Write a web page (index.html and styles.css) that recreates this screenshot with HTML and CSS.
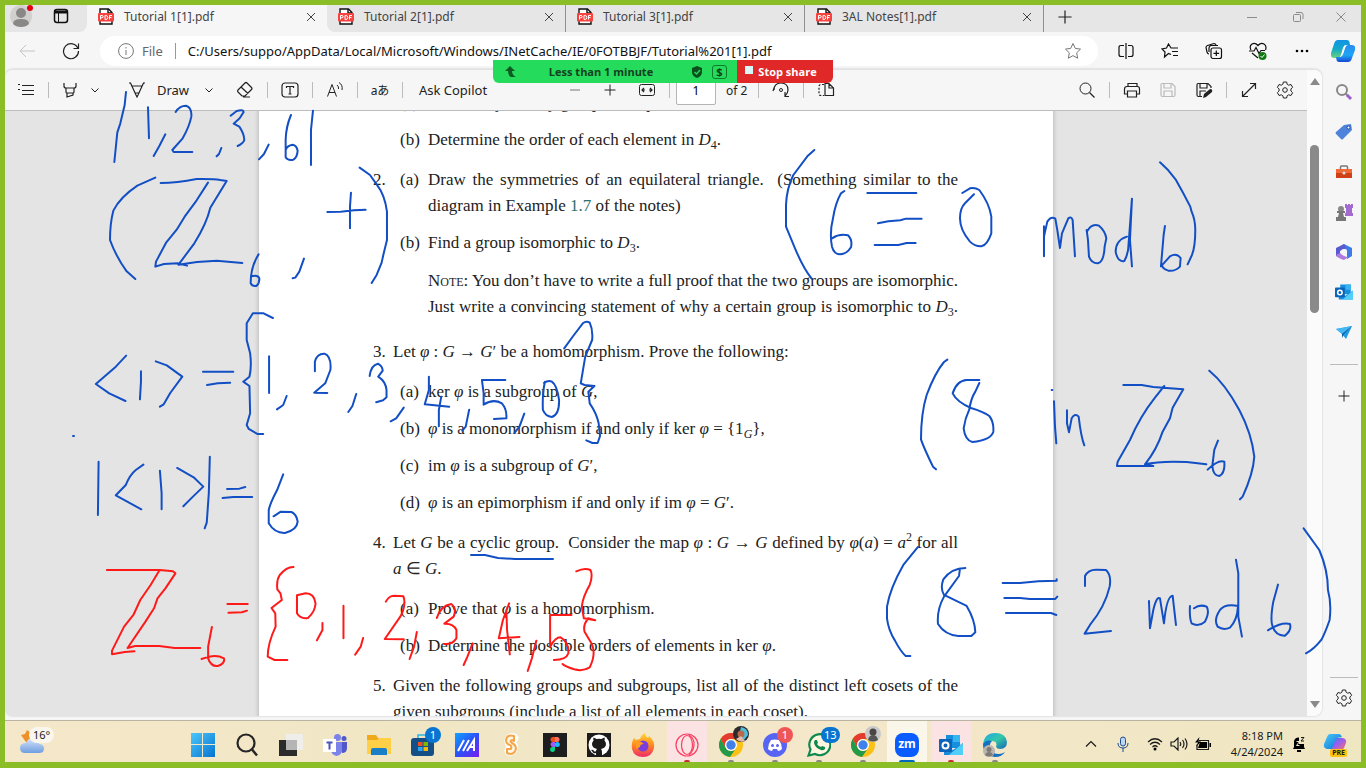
FILE: index.html
```html
<!DOCTYPE html>
<html lang="en">
<head>
<meta charset="utf-8">
<title>Tutorial 1[1].pdf</title>
<link rel="stylesheet" href="styles.css">
</head>
<body>
<svg class="defs" aria-hidden="true">
  <symbol id="pdf" viewBox="0 0 16 18">
    <path d="M2 1h8.500l3.500 3.500V16H2z" fill="#fff" stroke="#111" stroke-width="1.400"/><path d="M10 1v4h4" fill="none" stroke="#111" stroke-width="1.400"/>
    <rect x="0" y="5" width="16" height="8.500" rx="1" fill="#f8423e"/>
    <path d="M2.500 11.500v-4h1.500a1 1 0 0 1 0 2.300h-1.500M7 7.500v4h.8a2 2 0 0 0 0-4zM11.500 11.500v-4h2.500M11.500 9.500h2" fill="none" stroke="#fff"/>
  </symbol>
  <symbol id="x" viewBox="0 0 16 16"><path d="M4 4l8 8M12 4l-8 8" class="ln"/></symbol>
  <symbol id="chev" viewBox="0 0 12 12"><path d="M2.500 4.500L6 8l3.500-3.500" class="ln"/></symbol>
  <symbol id="plus" viewBox="0 0 20 20"><path d="M10 4.500v11M4.500 10h11" class="ln"/></symbol>
  <symbol id="gear" viewBox="0 0 20 20"><circle cx="10" cy="10" r="2.300" class="ln"/><path d="M8.400 2h3.200l.6 2.300 1.500.9 2.300-.7 1.600 2.800-1.700 1.700v2l1.700 1.700-1.600 2.800-2.300-.7-1.500.9-.6 2.300H8.400l-.6-2.300-1.500-.9-2.300.7-1.600-2.800L4.100 11V9L2.400 7.300 4 4.500l2.300.7 1.500-.9z" class="ln"/></symbol>
  <symbol id="outlook" viewBox="0 0 24 24"><rect x="7" y="2" width="14" height="13" fill="#1490df"/><path d="M14 2h7v7h-7z" fill="#36b5f0"/><path d="M5 11l9 6 10-7v12H5z" fill="#1a8ad8"/><path d="M24 10v12H10z" fill="#50d0f8"/><rect x="0" y="6" width="13" height="13" rx="1" fill="#0c64b8"/><circle cx="6.500" cy="12.500" r="3" fill="none" stroke="#fff" stroke-width="2"/></symbol>
  <symbol id="chrome" viewBox="0 0 24 24"><circle cx="12" cy="12" r="12" fill="#fbc116"/><path d="M1.600 6A12 12 0 0 1 22.400 6H12a6 6 0 0 0-5.200 9z" fill="#e33b2e"/><path d="M1.600 6A12 12 0 0 0 11 24l6.200-9A6 6 0 0 1 6.800 15z" fill="#229a4a"/><circle cx="12" cy="12" r="6" fill="#fff"/><circle cx="12" cy="12" r="4.700" fill="#3f80ea"/></symbol>
  <symbol id="copilot" viewBox="0 0 24 22"><path d="M7 0h9q2 0 2.500 2L19 5h-4q-2 0-3 3l-2 7q-1 3-3 3H3q-4 0-3-5L3 4q1-4 4-4z" fill="url(#cpa)"/><path d="M17 22H8q-2 0-2.500-2L5 17h4q2 0 3-3l2-6q1-3 3-3h4q4 0 3 5l-3 8q-1 4-4 4z" fill="url(#cpb)"/><path d="M12 8q1-3 3-3l-3 9q-1 3-3 3l2-4z" fill="#fff" opacity=".85"/></symbol>
  <linearGradient id="cpa" x2="0" y2="1"><stop stop-color="#1192e6"/><stop offset=".5" stop-color="#12a9c8"/><stop offset="1" stop-color="#6bd37a"/></linearGradient>
  <linearGradient id="cpb" x2="0" y2="1"><stop stop-color="#2a8cf0"/><stop offset=".6" stop-color="#1ba6f6"/><stop offset="1" stop-color="#1747d6"/></linearGradient>
  <linearGradient id="pre" x2="1" y2="1"><stop stop-color="#1e8cf0"/><stop offset=".45" stop-color="#9b5cf0"/><stop offset="1" stop-color="#ff7a5a"/></linearGradient>
  <linearGradient id="win" x2="1" y2="1"><stop stop-color="#4cc8fb"/><stop offset="1" stop-color="#0573d0"/></linearGradient>
  <linearGradient id="maxi" x2="1" y2="1"><stop stop-color="#10a4ff"/><stop offset=".5" stop-color="#2a52f8"/><stop offset="1" stop-color="#7a1cf0"/></linearGradient>
  <linearGradient id="fox" x2="0" y2="1"><stop stop-color="#ffd637"/><stop offset=".5" stop-color="#ff8a1e"/><stop offset="1" stop-color="#f0286c"/></linearGradient>
  <linearGradient id="edge" x2="1" y2="1"><stop stop-color="#1fa6e8"/><stop offset=".5" stop-color="#34c8a8"/><stop offset="1" stop-color="#1565b8"/></linearGradient>
  <linearGradient id="cloud" x2="0" y2="1"><stop stop-color="#d7e6fb"/><stop offset="1" stop-color="#6f9ee0"/></linearGradient>
</svg>

<div class="desktop">
  <header class="tabstrip">
    <div class="corner">
      <button class="avatar" aria-label="Profile"><svg width="22" height="22"><circle cx="11" cy="11" r="11" fill="#d2d0ce"/><circle cx="11" cy="8" r="5" fill="#8a8886"/><path d="M3 19q0-5 8-5t8 5q-3 3-8 3t-8-3z" fill="#8a8886"/></svg><span class="dot"></span></button>
      <button aria-label="Workspaces"><svg width="16" height="16"><rect x="1.500" y="1.500" width="13" height="13" rx="2.500" fill="none" stroke="#111" stroke-width="1.500"/><path d="M1 2.500h14v3H1z" fill="#111"/><path d="M5.500 5v9" stroke="#111"/></svg></button>
    </div>
    <div class="tab active"><svg width="16" height="18"><use href="#pdf"/></svg><span>Tutorial 1[1].pdf</span><button aria-label="Close tab"><svg width="16" height="16"><use href="#x"/></svg></button></div>
    <div class="tabs">
      <div class="tab"><svg width="16" height="18"><use href="#pdf"/></svg><span>Tutorial 2[1].pdf</span><button aria-label="Close tab"><svg width="16" height="16"><use href="#x"/></svg></button></div>
      <div class="tab"><svg width="16" height="18"><use href="#pdf"/></svg><span>Tutorial 3[1].pdf</span><button aria-label="Close tab"><svg width="16" height="16"><use href="#x"/></svg></button></div>
      <div class="tab"><svg width="16" height="18"><use href="#pdf"/></svg><span>3AL Notes[1].pdf</span><button aria-label="Close tab"><svg width="16" height="16"><use href="#x"/></svg></button></div>
      <button class="newtab" aria-label="New tab"><svg width="24" height="24" viewBox="0 0 20 20"><use href="#plus"/></svg></button>
      <div class="winbtns">
        <button aria-label="Minimize"><svg width="12" height="12"><path d="M1 6.500h10" class="ln"/></svg></button>
        <button aria-label="Restore"><svg width="12" height="12"><rect x="1.500" y="3.500" width="7" height="7" rx="1" class="ln"/><path d="M4 1.500h5q2 0 2 2V8" class="ln"/></svg></button>
        <button aria-label="Close"><svg width="12" height="12"><path d="M1.500 1.500l9 9M10.500 1.500l-9 9" class="ln"/></svg></button>
      </div>
    </div>
  </header>

  <nav class="address">
    <button class="nav back" aria-label="Back"><svg width="18" height="16"><path d="M17 8H2M8 2L2 8l6 6" class="ln"/></svg></button>
    <button class="nav" aria-label="Refresh"><svg width="18" height="18"><path d="M16 6.500A7.500 7.500 0 1 0 16.500 9M16.500 1.500V6.500h-5" class="ln bold"/></svg></button>
    <div class="omnibox">
      <svg width="16" height="16" class="grey"><circle cx="8" cy="8" r="7.400" class="ln"/><path d="M8 7v5M8 4v1.500" class="ln"/></svg>
      <span class="scheme">File</span>
      <input class="url" aria-label="Address" value="C:/Users/suppo/AppData/Local/Microsoft/Windows/INetCache/IE/0FOTBBJF/Tutorial%201[1].pdf">
      <button class="grey" aria-label="Favorite"><svg width="18" height="18"><path d="M9 1.500l2.300 4.900 5.200.7-3.800 3.700.9 5.400L9 13.600l-4.600 2.600.9-5.400L1.500 7.100l5.200-.7z" class="ln"/></svg></button>
    </div>
    <div class="actions">
      <button aria-label="Split screen"><svg width="18" height="16"><path d="M7 2.500H4q-2 0-2 2v7q0 2 2 2h3M11 2.500h3q2 0 2 2v7q0 2-2 2h-3M9 0v16" class="ln bold"/></svg></button>
      <button aria-label="Favorites"><svg width="18" height="16"><path d="M10 11.500l-2.500-1-4 3.500.5-5L1 6l4.500-1L7.500 1 10 5h7M11 8.500h6M12 12.500h5" class="ln bold"/></svg></button>
      <button aria-label="Collections"><svg width="18" height="18"><rect x="6" y="6" width="10.500" height="10.500" rx="2" class="ln bold"/><path d="M11.300 8.500v5.600M8.500 11.300h5.600M4 12q-1.500 0-2-2L1 5.500Q1 4 2.500 3.500L9 1.500q1.500 0 2 1.500M4 10V6q0-2 2-2.500h7" class="ln bold"/></svg></button>
      <button aria-label="Browser essentials"><svg width="18" height="18"><path d="M2 8Q0 4 3 2t6 1.500Q12 0 15 2t1.500 6M0 9h5l2-3.500 3 6 2-3h4M3 11l6 5" class="ln bold"/><circle cx="13.500" cy="14" r="4" fill="#107c10"/><path d="M11.500 14l1.500 1.500 2.500-3" stroke="#fff" fill="none"/></svg></button>
      <button aria-label="More"><svg width="16" height="4"><circle cx="3" cy="2" r="1.300"/><circle cx="8" cy="2" r="1.300"/><circle cx="13" cy="2" r="1.300"/></svg></button>
      <button class="cop" aria-label="Copilot"><svg width="24" height="22"><use href="#copilot"/></svg></button>
    </div>
  </nav>

  <main class="content">
    <section class="viewer">
      <div class="viewer-main">
        <div class="toolbar">
          <button class="ib" aria-label="Contents"><svg width="20" height="20"><path d="M6 5.500h12M6 10.500h12M6 14.500h12M2 4.500h2M2 9.500h2" class="ln"/></svg></button>
          <i class="sep"></i>
          <button class="ib hl" aria-label="Highlight"><svg width="20" height="20"><path d="M3 3v3q0 2 2 2h8q2 0 2-2V3M5 8v4q0 1 1 1h6q1 0 1-1V8M6 13v4l6-2v-2" class="ln bold"/></svg></button>
          <button class="chv" aria-label="Highlight options"><svg width="12" height="12"><use href="#chev"/></svg></button>
          <button class="ib pen" aria-label="Pen"><svg width="20" height="20"><path d="M2 3h2M16 3h2M3.500 3L9 15l1 2 1-2 5.500-12M4.500 6h11M8 13h4" class="ln bold"/></svg></button>
          <button class="draw">Draw</button>
          <button class="chv c2" aria-label="Draw options"><svg width="12" height="12"><use href="#chev"/></svg></button>
          <button class="ib erase" aria-label="Erase"><svg width="20" height="20"><path d="M12 3l4.500 4.500q1 1 0 2L10 16H7l-4-4q-1-1 0-2L10 3q1-1 2 0zM6 7l7 6.500M8 17h7" class="ln bold"/></svg></button>
          <i class="sep"></i>
          <button class="ib" aria-label="Add text"><svg width="20" height="20"><rect x="2" y="3" width="16" height="14" rx="3" class="ln bold"/><path d="M6.500 8V6.500h7V8M10 6.500v7.500M8.500 14h3" class="ln bold"/></svg></button>
          <i class="sep"></i>
          <button class="ib" aria-label="Read aloud"><svg width="20" height="20"><path d="M2.500 16.500l4.500-12 4.500 12M4 12.500h6M12 5q2 1.500 1.500 4M14 2.500q4 2.500 3 7.500" class="ln"/></svg></button>
          <i class="sep"></i>
          <button class="ib trans" aria-label="Translate">aあ</button>
          <i class="sep"></i>
          <button class="ask">Ask Copilot</button>
          <button class="ib minus" aria-label="Zoom out"><svg width="20" height="20"><path d="M5 10h10" class="ln bold"/></svg></button>
          <button class="ib zin" aria-label="Zoom in"><svg width="20" height="20"><use href="#plus"/></svg></button>
          <button class="ib fit" aria-label="Fit to width"><svg width="20" height="20"><rect x="2.500" y="4.500" width="15" height="11" rx="2" class="ln"/><path d="M4.500 10h3.500M12 10h3.500M7 8l-2 2 2 2M13 8l2 2-2 2" class="ln bold"/></svg></button>
          <i class="sep tight"></i>
          <input class="pageno" aria-label="Page number" value="1">
          <span class="of">of 2</span>
          <i class="sep"></i>
          <button class="ib" aria-label="Rotate"><svg width="20" height="20"><path d="M3 10Q3 3 10 3t7 7q0 3-3 6M14 12v4.500h4M3 8l-1 3" class="ln bold"/><circle cx="10" cy="10" r="1.500" class="ln"/></svg></button>
          <i class="sep"></i>
          <button class="ib" aria-label="Page view"><svg width="20" height="20"><path d="M8 4.500H5q-2 0-2 2v7q0 2 2 2h3" class="ln bold" stroke-dasharray="2 1.500"/><path d="M9 3.500h4l4.500 4.500v7.500H9zM13 3.500V8h4.500" class="ln bold"/></svg></button>
          <button class="ib right" aria-label="Find"><svg width="20" height="20"><circle cx="8.500" cy="8.500" r="5.500" class="ln"/><path d="M12.500 12.500l5 5" class="ln bold"/></svg></button>
          <i class="sep"></i>
          <button class="ib" aria-label="Print"><svg width="20" height="20"><path d="M6 6V3.500h9V6M5 14H2.500V9q0-2.500 2.500-2.500h10.500q2 0 2 2.500v5H15M5.500 11h9v6h-9z" class="ln bold"/></svg></button>
          <button class="ib g16 dim" aria-label="Save"><svg width="20" height="20"><path d="M4 3.500h10l3 3V15q0 1.500-1.500 1.500h-11Q3 16.500 3 15V5q0-1.500 1-1.500zM6 3.500V8h7V3.500M6 16.500V11h8v5.500" class="ln bold"/></svg></button>
          <button class="ib g16" aria-label="Save as"><svg width="20" height="20"><path d="M8 16.500H4.500Q3 16.500 3 15V5q0-1.500 1-1.500h10l3 3V8M6 3.500V8h7V3.500M6 16.500V11h6" class="ln bold"/><path d="M9 18l1-4 6-5q3 0 2 3l-6 5z" fill="#222"/></svg></button>
          <i class="sep"></i>
          <button class="ib" aria-label="Full screen"><svg width="20" height="20"><path d="M3.500 16.500l13-13M11 3.500h5.500V9M9 16.500H3.500V11" class="ln bold"/></svg></button>
          <button class="ib g16 last" aria-label="Settings"><svg width="20" height="20"><use href="#gear"/></svg></button>
        </div>
        <div class="viewport">
          <article class="page">
            <ol class="sub first">
              <li><b>(a)</b><p>Find the symmetry group of a square.</p></li>
              <li><b>(b)</b><p>Determine the order of each element in <i>D</i><sub>4</sub>.</p></li>
            </ol>
            <section class="q"><b>2.</b>
              <ol class="sub">
                <li><b>(a)</b><p><span class="full">Draw the symmetries of an equilateral triangle.&nbsp; (Something similar to the</span><span>diagram in Example <a href="#ex">1.7</a> of the notes)</span></p></li>
                <li><b>(b)</b><p>Find a group isomorphic to <i>D</i><sub>3</sub>.</p></li>
                <li class="note"><b></b><p><span><span class="sc">Note:</span> You don’t have to write a full proof that the two groups are isomorphic.</span><span class="full">Just write a convincing statement of why a certain group is isomorphic to <i>D</i><sub>3</sub>.</span></p></li>
              </ol>
            </section>
            <section class="q wide"><b>3.</b>
              <div><p>Let <i>φ</i> : <i>G</i> → <i>G</i>′ be a homomorphism. Prove the following:</p>
              <ol class="sub">
                <li><b>(a)</b><p>ker <i>φ</i> is a subgroup of <i>G</i>,</p></li>
                <li><b>(b)</b><p><i>φ</i> is a monomorphism if and only if ker <i>φ</i> = {1<sub><i>G</i></sub>},</p></li>
                <li><b>(c)</b><p>im <i>φ</i> is a subgroup of <i>G</i>′,</p></li>
                <li><b>(d)</b><p><i>φ</i> is an epimorphism if and only if im <i>φ</i> = <i>G</i>′.</p></li>
              </ol></div>
            </section>
            <section class="q"><b>4.</b>
              <div><p><span class="full">Let <i>G</i> be a cyclic group.&nbsp; Consider the map <i>φ</i> : <i>G</i> → <i>G</i> defined by <i>φ</i>(<i>a</i>) = <i>a</i><sup>2</sup> for all</span><span><i>a</i> ∈ <i>G</i>.</span></p>
              <ol class="sub">
                <li><b>(a)</b><p>Prove that <i>φ</i> is a homomorphism.</p></li>
                <li><b>(b)</b><p>Determine the possible orders of elements in ker <i>φ</i>.</p></li>
              </ol></div>
            </section>
            <section class="q"><b>5.</b>
              <div><p><span class="full">Given the following groups and subgroups, list all of the distinct left cosets of the</span><span>given subgroups (include a list of all elements in each coset).</span></p></div>
            </section>
          </article>
        </div>
      </div>
      <div class="scrollbar"><i class="up"></i><i class="thumb"></i><i class="down"></i></div>
    </section>
    <aside class="sidebar">
      <button aria-label="Search"><svg width="18" height="18"><circle cx="7" cy="7" r="5" fill="none" stroke="#888" stroke-width="2"/><path d="M10.500 10.500l2 2" stroke="#888" stroke-width="2"/><path d="M12 12l4 4" stroke="#9c5fd0" stroke-width="3"/></svg></button>
      <button aria-label="Shopping"><svg width="18" height="18"><path d="M9 2l7-1 1 6-9 9q-1 1-2 0L1 11q-1-1 0-2z" fill="#4e83dc"/><circle cx="13.500" cy="4.500" r="1.500" fill="#fff" stroke="#234a9a"/></svg></button>
      <button aria-label="Tools"><svg width="18" height="18"><path d="M5.500 6V4q0-1 1-1h5q1 0 1 1v2" fill="none" stroke="#777" stroke-width="1.500"/><path d="M1 6h16v4H1z" fill="#ef6a36"/><path d="M1 10h16v5H1z" fill="#cf4114"/><circle cx="9" cy="10" r="1.600" fill="#ddd"/></svg></button>
      <button aria-label="Games"><svg width="18" height="18"><path d="M10 1h2v1h1V1h2v1h1V1h2v4h-1v5h1v3h-8v-3h1V5h-1z" fill="#a36bd2"/><circle cx="6" cy="6" r="3" fill="#888"/><path d="M2 8h8v2H8l1 4h2v4H1v-4h2l1-4H2z" fill="#777"/></svg></button>
      <button aria-label="Microsoft 365"><svg width="18" height="18"><path d="M9 1l8 4v8l-5 3V7L5 4z" fill="#3f7be6"/><path d="M9 1L1 5v8l4 2V8l6-3z" fill="#5a5ad0"/><path d="M1 12l4-2 3 2.500 5 2-4 2.500q-5-1-8-5z" fill="#b07ae0"/><circle cx="9" cy="9" r="3" fill="#f6f6f6"/></svg></button>
      <button aria-label="Outlook"><svg width="18" height="18"><use href="#outlook"/></svg></button>
      <button aria-label="Drop"><svg width="18" height="18"><path d="M1 6l16-3-6 13-4-5z" fill="#1d9be6"/><path d="M1 6l16-3L7 11z" fill="#45b7f2"/><path d="M7 11l10-8-8 8-2 4z" fill="#0b5e9e"/></svg></button>
      <hr>
      <button aria-label="Customize"><svg width="20" height="20"><use href="#plus"/></svg></button>
      <hr class="low">
      <button aria-label="Settings"><svg width="20" height="20"><use href="#gear"/></svg></button>
    </aside>
  </main>

  <footer class="taskbar">
    <button class="weather" aria-label="Weather"><svg width="26" height="26"><path d="M1 6l4-1 2-4 4 3 6 4-9 8z" fill="#ef8f28"/><path d="M5 24q-5 0-5-5t6-5q2-5 7-5t6 6q5 0 5 4.500T19 24z" fill="url(#cloud)"/></svg><span class="temp">16°</span></button>
    <div class="apps">
      <button aria-label="Start"><svg width="24" height="24"><path d="M0 0h11v11H0zM12 0h12v11H12zM0 12h11v12H0zM12 12h12v12H12z" fill="url(#win)"/></svg></button>
      <button aria-label="Search"><svg width="24" height="24"><circle cx="11" cy="10" r="8.500" fill="none" stroke="#262626" stroke-width="2.200"/><path d="M17 16.500l5 6" stroke="#262626" stroke-width="2.500"/></svg></button>
      <button aria-label="Task view"><svg width="24" height="24"><rect x="0" y="7" width="18" height="16" fill="#2b2b2b"/><rect x="7" y="1" width="17" height="16" fill="#eee" opacity=".9"/><rect x="7" y="7" width="11" height="10" fill="#b5b5b5"/></svg></button>
      <button aria-label="Teams"><svg width="24" height="24"><circle cx="14.500" cy="4.500" r="3.500" fill="#7b83eb"/><circle cx="21" cy="5.500" r="2.500" fill="#5059c9"/><path d="M17 9h7v6q0 5-5 5z" fill="#5059c9"/><path d="M8 9h11v8q0 5-5.500 6Q9 22 8 18z" fill="#7b83eb"/><rect x="0" y="6" width="13" height="13" fill="#fff"/><path d="M3.500 9.500h6M6.500 9.500v7" stroke="#4b53bc" stroke-width="2"/></svg></button>
      <button aria-label="File Explorer"><svg width="24" height="24"><path d="M0 2h9l2 3h13v16H0z" fill="#f0a81c"/><path d="M0 7h10l2-2h12v16H0z" fill="#ffcf48"/><path d="M4 22v-5q0-2 2-2h12q2 0 2 2v5z" fill="#1b7fc8"/></svg></button>
      <button aria-label="Store"><svg width="24" height="24"><path d="M7 6V2h8v4" fill="none" stroke="#2bb4e8" stroke-width="1.500"/><rect x="0" y="5" width="23" height="18" rx="3" fill="#154f86"/><path d="M7 9h4.500v4H7z" fill="#f05022"/><path d="M12.500 9H17v4h-4.500z" fill="#7db800"/><path d="M7 14h4.500v4H7z" fill="#2aa5f0"/><path d="M12.500 14H17v4h-4.500z" fill="#fdb800"/></svg><span class="badge">1</span></button>
      <button aria-label="MyASUS"><svg width="24" height="24"><rect width="24" height="24" fill="url(#maxi)"/><path d="M3 18L9 7M8 18l6-11M12 18l7-11v11M15 14h4" stroke="#fff" stroke-width="2" fill="none"/></svg></button>
      <button aria-label="Scratch"><svg width="24" height="24"><path d="M15 5q-5-1-5 3t3 4 0 6h-3" stroke="#fff" stroke-width="9" fill="none" stroke-linecap="round" stroke-linejoin="round"/><path d="M15 8V3Q8 1 7 7q0 4 4 5 2 1 1 4H8v4q7 3 9-4 0-4-4-6-3-2 0-3z" fill="#fff6e4" stroke="#f5a64a" stroke-width="2" stroke-linejoin="round"/></svg></button>
      <button aria-label="Figma"><svg width="24" height="24"><rect width="24" height="24" fill="#1e1e1e"/><path d="M12 4H10a2.500 2.500 0 0 0 0 5h2z" fill="#f24e1e"/><path d="M12 4h2a2.500 2.500 0 0 1 0 5h-2z" fill="#ff7262"/><path d="M12 9H10a2.500 2.500 0 0 0 0 5h2z" fill="#a259ff"/><circle cx="14.300" cy="11.500" r="2.500" fill="#1abcfe"/><path d="M12 14H10a2.500 2.500 0 1 0 2 3z" fill="#0acf83"/></svg></button>
      <button aria-label="GitHub"><svg width="24" height="24"><rect width="24" height="24" fill="#1b1b1b"/><circle cx="12" cy="12" r="10.500" fill="#fff"/><path d="M9 24v-4q-3 1-4-2l-1-1q2-1 3 1 1 1 2 0 0-1 1-2-5-1-5-5 0-2 1.500-3.500Q6 6 6.500 4.500q1 0 3 1.500 2.500-.7 5 0 2-1.500 3-1.500.5 1.500 0 3Q19 9 19 11q0 4-5 5 1 1 1 3v5z" fill="#1b1b1b"/></svg></button>
      <button aria-label="Firefox"><svg width="24" height="24"><path d="M3 5l2 2q2-1 4-1 1-4 5-6 0 3 3 5l1-2q6 5 5 12-2 9-11 9T1 16Q0 10 3 5z" fill="url(#fox)"/><circle cx="12" cy="13" r="5.500" fill="#7a3fd8"/><path d="M5 9q4-2 8 2-4 0-4 3l-4 2z" fill="#ff9a22"/></svg></button>
      <button class="pink run red" aria-label="Opera"><svg width="24" height="24"><circle cx="12" cy="12" r="11" fill="none" stroke="#fa3e62" stroke-width="1.200"/><ellipse cx="12" cy="12" rx="5.500" ry="9.500" fill="none" stroke="#fa3e62" stroke-width="1.200"/><path d="M14 2q6 4 5 10.500T14 22" fill="none" stroke="#fa3e62" stroke-width="1.200"/></svg></button>
      <button class="run" aria-label="Chrome"><svg width="24" height="24"><use href="#chrome"/></svg><svg class="face" width="16" height="16"><circle cx="8" cy="8" r="8" fill="#2e2a2c"/><path d="M8 1q7 1 7 8l-4 5-5-4z" fill="#4cc0dc"/><circle cx="8" cy="8" r="3.500" fill="#b9694a"/><path d="M3 13l5-3 4 5q-5 2-9-2z" fill="#e8b8a8"/></svg></button>
      <button class="run" aria-label="Discord"><svg width="24" height="24"><circle cx="12" cy="12" r="12" fill="#5865f2"/><path d="M8 7q4-1 8 0 3 4 3 9-2 2-4 2l-1-2h-4l-1 2q-2 0-4-2 0-5 3-9z" fill="#fff"/><circle cx="9.500" cy="12.500" r="1.500" fill="#5865f2"/><circle cx="14.500" cy="12.500" r="1.500" fill="#5865f2"/></svg><span class="badge coral">1</span></button>
      <button class="run" aria-label="WhatsApp"><svg width="24" height="24"><path d="M1.500 22.500l2-6A10.500 10.500 0 1 1 8 21z" fill="#fff6e0" stroke="#0e8a50" stroke-width="2.200"/><path d="M8 7l2 0 1 3-1 1q1 2 4 3l1-1 3 1v2q-2 2-4 1-6-2-7-7 0-2 1-3z" fill="#0e8a50"/></svg><span class="badge">13</span></button>
      <button class="run" aria-label="Chrome profile"><svg width="24" height="24"><use href="#chrome"/></svg><svg class="face" width="16" height="16"><circle cx="8" cy="8" r="8" fill="#c8c8c8"/><circle cx="8" cy="6" r="3.500" fill="#4a4644"/><path d="M3 14q1-5 5-5t5 5q-5 3-10 0z" fill="#555"/></svg></button>
      <button class="lit run blue" aria-label="Zoom"><span class="zm">zm</span></button>
      <button class="pink run red" aria-label="Outlook"><svg width="24" height="24"><use href="#outlook"/></svg></button>
      <button class="run" aria-label="Edge"><svg width="24" height="24"><path d="M0 12Q1 0 12 0t12 9q0 7-7 7-3 0-4-2 2-6-4-6-6 0-9 4z" fill="url(#edge)"/><path d="M0 11q3-5 9-3-3 3-2 7 2 6 9 6 3 0 6-2-3 5-10 5Q0 23 0 11z" fill="#1470c0"/><circle cx="6" cy="18" r="6" fill="#b9b5b0"/><circle cx="6" cy="16.500" r="2.500" fill="#7e7a76"/><path d="M2 22q1-3 4-3t4 3q-4 3-8 0z" fill="#7e7a76"/></svg></button>
    </div>
    <div class="tray">
      <button aria-label="Hidden icons"><svg width="12" height="12"><path d="M1 8.500l5-5 5 5" class="ln bold"/></svg></button>
      <button class="mic" aria-label="Microphone"><svg width="12" height="16"><rect x="3.500" y="1" width="5" height="9" rx="2.500" fill="#bcd6f5" stroke="#1c4b8c"/><path d="M1 7q0 5 5 5t5-5M6 12v4" fill="none" stroke="#1c4b8c"/></svg></button>
      <button class="sys" aria-label="Network, volume and battery">
        <svg width="16" height="14"><path d="M1 5q7-6.500 14 0M3 7.500q5-4.500 10 0M5.500 10q2.500-2.500 5 0" class="ln bold"/><circle cx="8" cy="12" r="1.500"/></svg>
        <svg width="18" height="14"><path d="M1 5h3l4-4v12L4 9H1zM10 5q1.500 2 0 4M12.500 3q3 4 0 8M15 1.500q4 5.500 0 11" class="ln bold"/></svg>
        <svg width="16" height="14"><path d="M4 3.500h9.500v9H2v-5" class="ln bold"/><path d="M5 5h7v6H3zM14.500 6H16v4h-1.500z"/><path d="M4.500 0L0 5.500h3L1 10l5-5.500H3.500z"/></svg>
      </button>
      <button class="clock"><span>8:18 PM</span><span>4/24/2024</span></button>
      <button class="bell" aria-label="Notifications"><svg width="14" height="16"><path d="M2 11V6q0-4 4-4.500h1V8h5v3l1 2H1zM5 14h4v2H5z"/><path d="M9 1.500h3L9 5h3" stroke="#1a1a1a" fill="none"/><path d="M4.500 5.500h3l-3 4h3" stroke="#f3e6c6" fill="none"/></svg></button>
      <button class="pre" aria-label="Copilot preview"><svg width="24" height="24"><path d="M7 2h9q2 0 3 3l-5 1q-2 8-5 11H4Q0 16 1 12L4 5q1-3 3-3z" fill="url(#win)"/><path d="M13 6h7q4 1 3 5l-2 5q-1 3-5 3H7q3-3 4-8z" fill="url(#pre)"/></svg><span>PRE</span></button>
    </div>
  </footer>

  <div class="sharebar">
    <div class="status"><svg width="12" height="12"><path d="M5 0L0 5h3q0 5 3 6h5q-4-2-4-6h3z" fill="#0d5a22"/></svg><span>Less than 1 minute</span><svg width="12" height="12"><path d="M6 0l5 2v4q0 4-5 6Q1 10 1 6V2z" fill="#0b4f1d"/><path d="M3.500 6l2 2 3.500-4" fill="none" stroke="#22d95c" stroke-width="1.500"/></svg><span class="cash">$</span></div>
    <button class="stop"><i></i>Stop share</button>
  </div>

  <svg class="ink" width="1366" height="768" viewBox="0 0 1366 768" aria-hidden="true">
    <g class="blue" transform="translate(80 100) scale(.3333)">
      <path d="M138-24L134 15 121 70 112 97 103 186M204 22L207 115M256 103L238 138 221 168M287 36Q298 17 318 17 336 22 334 50 328 80 308 115L277 150 281 156H337M424 144L417 162 410 169M452 47L470 33Q490 27 491 36L479 55 461 71 478 80Q492 100 493 120 490 130 473 138M566 134L552 162 537 178M633 45Q618 80 617 120V172Q624 183 640 179 652 172 653 152 650 136 638 134 622 136 617 150M699 32L693 90V195"/>
      <path d="M226 233L172 257Q120 292 100 332 90 370 90 420 108 470 140 514L166 537M242 249Q290 249 350 237 400 236 421 240L440 243 391 323Q380 370 343 430L300 488M384 248L350 301 314 350 290 389 259 427 228 485 226 500 252 492 293 490 321 497M295 494Q350 484 410 482L487 489M536 463Q512 500 512 550 517 560 529 558 539 549 538 535 534 524 514 529M672 476L658 515 646 533 638 535M742 336L782 335 822 331 857 329M813 278L810 320V385M839 203L870 225 890 253Q915 285 921 335V420L910 465 905 488 890 525 875 549"/>
    </g>
    <g class="blue" transform="translate(80 310) scale(.3444 .3333)">
      <path d="M134 137L104 170 46 222 85 250 132 273M177 184V215L174 268M220 154L252 166 297 200 262 249 243 283 232 290M357 185H445M369 225L400 220 436 218M560 24L533 10H502L484 40V90L494 130Q499 170 492 200L474 215 492 228 494 310 484 345 490 357 515 372H532M549 139V249M600 258L590 285 572 298M682 184V155Q688 130 710 131 731 140 727 180L712 220 680 248 718 249M802 252L791 288 779 306M841 198Q845 165 865 161 878 168 879 182L866 200Q888 215 890 240V262L880 271 860 277M940 293L918 325 902 334M1013 200V240L1001 283 1072 290M1049 260L1042 300V349M1130 299L1120 350 1110 362M1235 210H1167L1172 250V284Q1200 265 1225 280 1240 298 1238 325L1202 327M1290 311L1276 350 1262 368M1350 215Q1342 250 1344 300 1352 320 1370 321 1392 315 1391 270 1385 225 1370 215 1360 210 1347 219M1406 115L1432 78 1460 40Q1470 32 1480 38 1490 60 1487 90L1467 140 1454 220 1465 225 1494 228 1476 245 1480 280Q1500 310 1506 340L1510 378 1503 399H1488L1470 391"/>
      <path d="M54 455L52 615M184 464L162 480Q145 494 133 525L104 556 178 598M232 482L237 550V598M282 474L330 502 358 530 325 563 300 589M377 440L374 550 368 638 362 655M427 537L463 536 480 531M414 564L445 561H500M590 493L572 541Q552 580 548 600V640Q565 670 595 669 630 660 632 635 628 612 614 606L583 605 562 619"/>
    </g>
    <g class="blue" transform="translate(760 130) scale(.3333)">
      <path d="M163 60L142 79 100 135Q80 175 78 225V290L105 355Q130 415 155 446M253 183L243 190Q226 220 219 265 208 310 216 350 222 372 240 373 260 373 273 352 278 330 264 316 238 310 216 325M322 189H469M354 280L385 274 421 271 438 266H485M344 345H415L440 339H467M607 189L630 175Q645 172 658 180 688 220 694 260V310Q682 345 664 349 645 350 630 335 600 300 600 265 600 235 615 220L642 193M852 289V379 320L862 275Q873 258 886 266L892 300 900 354 906 310 925 265Q934 258 938 270L945 379M981 305Q995 278 1017 287 1036 303 1039 325L1034 350Q1032 395 1014 400 995 401 987 380L984 330 980 300M1101 320Q1068 330 1067 365 1073 397 1093 393 1106 370 1106 340L1116 206 1110 330 1116 409M1215 288L1211 315 1203 409 1230 379Q1250 368 1262 384L1260 410Q1245 425 1225 422 1205 415 1206 402M1200 97L1225 121 1248 150 1270 190 1291 230 1295 245Q1306 270 1306 300 1306 350 1296 375L1283 403"/>
    </g>
    <g class="blue" transform="translate(860 340) scale(.3333)">
      <path d="M262 59L252 66Q225 98 200 165 183 220 183 298 190 320 219 380L228 388M358 120H320Q290 122 278 160 290 185 333 204 370 215 388 228 402 245 400 275 393 300 337 306 315 300 311 265 315 235 328 208 333 175 346 155L358 129M575 150h2M582 184L585 260 589 310M621 211V250L627 277 635 235Q645 218 656 230 663 290 673 316M790 135H845L880 141 970 148 938 203 930 235 908 275Q890 330 855 373L880 378H771L773 365 810 300Q840 230 885 173L913 138M855 373Q900 362 980 366L1039 373M1074 302L1063 330 1057 378Q1060 408 1078 408 1096 400 1093 365 1075 358 1043 389M1048 92Q1095 130 1138 210 1175 280 1183 350 1180 400 1148 470L1140 478"/>
      <path d="M174 621L130 675Q90 745 81 800V835Q85 870 105 902 122 935 137 948H151M316 684Q275 684 250 718 240 745 252 765L320 798Q345 840 346 877L334 888H295Q255 885 234 852 230 810 252 770L297 708 300 686M428 729H480L535 724 590 722V718M433 774H480L510 777H586L592 770M438 819H573L589 825M675 738V708Q685 688 710 689L738 690Q755 705 749 740 735 800 690 855L674 881 753 873M867 783L870 865 880 810Q890 768 900 775L912 850Q920 768 938 767L948 855M990 798Q988 835 995 850 1015 862 1035 845 1050 815 1040 800 1020 792 1002 805M1135 798Q1095 790 1080 810 1060 840 1073 860 1090 872 1110 863 1132 840 1134 800M1128 659L1135 700V830L1146 890M1254 734L1240 785Q1230 840 1238 860 1248 888 1275 887 1296 870 1290 852 1265 845 1224 871M1331 565L1378 630Q1404 690 1404 750 1415 790 1409 840 1395 880 1384 900 1360 930 1338 940"/>
    </g>
    <path class="blue" d="M471 555L485 555 498 558 515 559H553"/>
    <path class="blue" d="M73 436h1"/>
    <g class="red" transform="translate(80 530) scale(.3444 .3333)">
      <path d="M78 120H232L270 124 277 130 248 175 225 205 215 235 190 275 140 351 M229 124L205 165 175 210 155 255 128 290 93 362V373L130 366 158 364M138 354L160 348H230L275 354H349M383 291L372 350V385Q380 410 400 408 422 400 418 385 400 375 375 380L353 387M428 222H487M431 248L470 247 485 242M620 111Q600 110 580 135 570 150 573 178L582 190 586 210 556 234 567 250 568 290Q545 340 545 380L565 390H602M630 198V250Q640 268 662 264 683 245 684 220 680 190 655 190L630 196M704 279V300L688 331M765 227V325M822 324L815 350 799 374M888 215Q897 197 912 197L939 199Q948 225 930 260L885 327 940 328M978 306L970 350 957 387M1036 264Q1047 227 1078 222 1095 235 1085 260L1058 281Q1085 280 1093 300V325Q1080 345 1057 342M1140 340L1125 380 1114 405M1246 220L1228 270 1216 325 1276 321M1238 240L1240 300 1248 373M1325 332L1312 385 1300 423M1427 255H1365V350Q1380 322 1395 322 1420 335 1418 370 1412 390 1376 390M1441 124Q1465 112 1482 120 1490 135 1480 165 1460 200 1457 230L1463 265 1496 271 1475 265Q1460 285 1465 305L1485 340Q1500 370 1480 412 1460 425 1435 418 1410 410 1401 402"/>
    </g>
  </svg>
</div>
</body>
</html>
```
FILE: styles.css
```css
* { box-sizing: border-box; }
body { margin: 0; font-family: "Noto Sans", "Open Sans", "Noto Sans CJK JP", sans-serif; font-size: 12px; color: #222; }
button { border: 0; padding: 0; margin: 0; background: none; font: inherit; color: inherit; display: flex; align-items: center; justify-content: center; }
input { font: inherit; border: 0; padding: 0; min-width: 0; }
.defs { position: absolute; width: 0; height: 0; }
.ln { fill: none; stroke: currentColor; stroke-width: 1; }
.ln.bold { stroke-width: 1.2; }

.desktop { position: relative; display: flex; flex-direction: column; height: 100vh; border: 5px solid #8bbd27; border-bottom-width: 6px; background: #f6f6f6; overflow: hidden; }

/* tabs */
.tabstrip { display: flex; height: 27px; flex: none; }
.corner { width: 82px; background: #e6e6e6; border-radius: 0 0 8px 0; display: flex; align-items: center; padding: 0 18px 5px 5px; justify-content: space-between; }
.avatar { position: relative; }
.dot { position: absolute; right: -1px; top: 0; width: 6px; height: 6px; border-radius: 50%; background: #e3000f; }
.tab { width: 239px; flex: none; display: flex; align-items: center; padding: 0 8px 4px 11px; gap: 10px; color: #444; }
.tab span { flex: 1; line-height: 16px; }
.tab.active { width: 240px; }
.tabs { flex: 1; display: flex; background: #e6e6e6; border-radius: 0 0 0 8px; }
.tabs .tab { border-right: 1px solid #8f8f8f; }
.newtab { padding: 0 0 4px 9px; }
.winbtns { margin-left: auto; display: flex; padding-bottom: 4px; color: #8a8a8a; }
.winbtns button { width: 46px; }
.winbtns button:last-child { width: 40px; }

/* address row */
.address { display: flex; height: 37px; flex: none; padding: 4px 0 3px; align-items: center; }
.nav { width: 44px; }
.back { color: #c4c4c4; }
.omnibox { flex: 1; height: 30px; margin: 0 6px 0 7px; padding: 0 16px 0 18px; background: #fff; border-radius: 15px; display: flex; align-items: center; font-size: 13px; }
.grey { color: #777; }
.scheme { color: #666; margin-left: 8px; padding-right: 12px; border-right: 1px solid #999; line-height: 16px; }
.url { flex: 1; margin-left: 12px; color: #111; }
.actions { display: flex; color: #111; }
.actions button { width: 44px; }
.actions .cop { width: 37px; }

/* viewer */
.content { flex: 1; min-height: 0; display: flex; }
.viewer { flex: 1; min-width: 0; display: flex; margin-bottom: 4px; border-top: 1px solid #e2e2e2; border-radius: 8px; overflow: hidden; box-shadow: 0 0 2px #bbb; }
.viewer-main { flex: 1; min-width: 0; display: flex; flex-direction: column; }
.toolbar { height: 41px; flex: none; display: flex; align-items: center; padding: 0 12px 0 11px; border-bottom: 1px solid #bdbdbd; background: #f6f6f6; font-size: 13px; }
.ib { width: 20px; height: 20px; flex: none; }
.sep { width: 1px; height: 16px; margin: 0 12px; background: #bbb; flex: none; }
.tight { margin-right: 6px; }
.chv { width: 12px; margin-left: 8px; }
.c2 { margin-left: 14px; }
.pen { margin-left: 26px; }
.draw { width: 32px; margin-left: 10px; }
.erase { margin-left: 20px; }
.trans { font-size: 12px; }
.ask { width: 72px; margin-left: 2px; white-space: nowrap; }
.minus { margin-left: 76px; color: #777; }
.zin { margin-left: 15px; }
.fit { margin-left: 17px; }
.pageno { width: 40px; height: 30px; border: 1px solid #b5b5b5; border-radius: 2px; background: #fff; text-align: center; font-size: 12px; }
.of { width: 20px; margin-left: 10px; white-space: nowrap; font-size: 12px; }
.right { margin-left: auto; }
.g16 { margin-left: 16px; }
.dim { color: #bbb; }
.viewport { flex: 1; min-height: 0; overflow: hidden; background: #e4e4e4; }
.scrollbar { width: 15px; background: #fbfbfb; display: flex; flex-direction: column; align-items: center; padding: 8px 0; }
.up { border: 5px solid transparent; border-top-width: 0; border-bottom: 7px solid #8a8a8a; }
.down { border: 5px solid transparent; border-bottom-width: 0; border-top: 7px solid #8a8a8a; margin-top: auto; }
.thumb { width: 9px; height: 168px; border-radius: 5px; background: #8a8a8a; margin-top: 60px; }

/* document */
.page { width: 794px; margin: -21px auto 0; padding: 0 95px 0 114px; background: #fff; box-shadow: 0 0 5px #aaa; font: 17px/26px "Liberation Serif", serif; color: #222; }
.page p, .page ol { margin: 0; padding: 0; list-style: none; }
.page b { font-weight: 400; }
.page p > span { display: block; white-space: nowrap; }
.page p > .full { text-align: justify; text-align-last: justify; white-space: normal; }
.page sub, .page sup { font-size: 12px; line-height: 0; }
.page a { color: #2f6f6a; text-decoration: none; }
.sc { font-variant: small-caps; }
.sub { display: flex; flex-direction: column; gap: 11px; flex: 1; }
.sub li { display: flex; }
.sub li > b { width: 35px; padding-left: 7px; flex: none; }
.sub li > p { flex: 1; min-width: 0; }
.sub .note { margin-top: 1px; }
.page .first { margin-left: 20px; }
.q { display: flex; margin-top: 14px; }
.q > b { width: 20px; flex: none; }
.q > div { flex: 1; }
.page .q > div > ol { margin-top: 14px; }
.wide { margin-top: 19px; }

/* sidebar */
.sidebar { width: 39px; flex: none; display: flex; flex-direction: column; align-items: center; padding: 3px 0 2px 5px; }
.sidebar button { width: 34px; height: 40px; flex: none; }
.sidebar hr { width: 28px; height: 1px; border: 0; background: #bbb; margin: 12px 0 11px; }
.sidebar .low { margin: auto 0 0; }

/* taskbar */
.taskbar { height: 42px; flex: none; display: flex; border-top: 1px solid #b9b3a2; background: linear-gradient(90deg, #f5e8ca, #f0e6c4 30%, #f4e7ca 60%, #efe6c2); color: #1a1a1a; }
.weather { position: relative; width: 176px; justify-content: flex-start; padding-left: 15px; }
.temp { position: absolute; left: 24px; top: 6px; padding: 0 4px; border-radius: 8px; background: #f9f6ee; font-size: 11px; line-height: 16px; }
.apps { display: flex; }
.apps button { width: 44px; padding-top: 6px; position: relative; }
.apps .pink { background: linear-gradient(#fbe3e4, #fbe3e4) center / 40px 100% no-repeat; }
.apps .lit { background: linear-gradient(#fbf6ea, #fbf6ea) center / 40px 100% no-repeat; }
.run::after { content: ""; position: absolute; bottom: 0; width: 6px; height: 2px; background: #888; border-radius: 2px 2px 0 0; }
.red::after { background: #c8322b; }
.blue::after { background: #0067c0; width: 16px; }
.badge { position: absolute; top: 6px; left: 24px; min-width: 16px; height: 16px; padding: 0 3px; border-radius: 8px; background: #0875d1; color: #fff; font-size: 11px; line-height: 16px; text-align: center; }
.coral { background: #ef5757; }
.face { position: absolute; top: 5px; right: 4px; }
.zm { width: 24px; height: 24px; border-radius: 8px; background: #0b5cff; color: #fff; font-weight: 700; font-size: 12px; line-height: 22px; }
.tray { margin-left: auto; display: flex; align-items: center; padding: 4px 14px 0 0; }
.mic { margin-left: 20px; }
.sys { margin-left: 18px; gap: 7px; }
.clock { width: 64px; margin-left: 8px; flex-direction: column; align-items: flex-end; font-size: 11px; line-height: 16px; }
.bell { margin-left: 9px; }
.pre { margin-left: 17px; position: relative; }
.pre span { position: absolute; right: 0; bottom: -1px; padding: 0 2px; border-radius: 2px; background: #ffc20e; font-size: 7px; line-height: 8px; font-weight: 700; }

/* screen share bar */
.sharebar { position: absolute; left: 488px; top: 55px; display: flex; height: 23px; border-radius: 0 0 6px 6px; overflow: hidden; font-size: 11px; font-weight: 700; font-family: "Open Sans", "Noto Sans", sans-serif; }
.status { width: 244px; background: #24db5b; display: flex; align-items: center; padding: 0 10px 0 12px; color: #14401f; }
.status > span:first-of-type { flex: 1; text-align: center; padding-right: 6px; }
.status .cash { margin-left: 9px; width: 15px; border: 1px solid #0f7a2c; border-radius: 3px; text-align: center; line-height: 12px; }
.stop { width: 96px; padding-right: 8px; background: #e02828; color: #fff; gap: 5px; white-space: nowrap; }
.stop i { width: 8px; height: 8px; background: #d8f7fb; margin-bottom: 4px; }

/* annotation ink */
.ink { position: absolute; left: -5px; top: -5px; pointer-events: none; fill: none; stroke-linecap: round; stroke-linejoin: round; }
.ink path { vector-effect: non-scaling-stroke; stroke-width: 2px; }
.ink .blue { stroke: #134fc4; }
.ink .red { stroke: #ff1a1a; }
```
